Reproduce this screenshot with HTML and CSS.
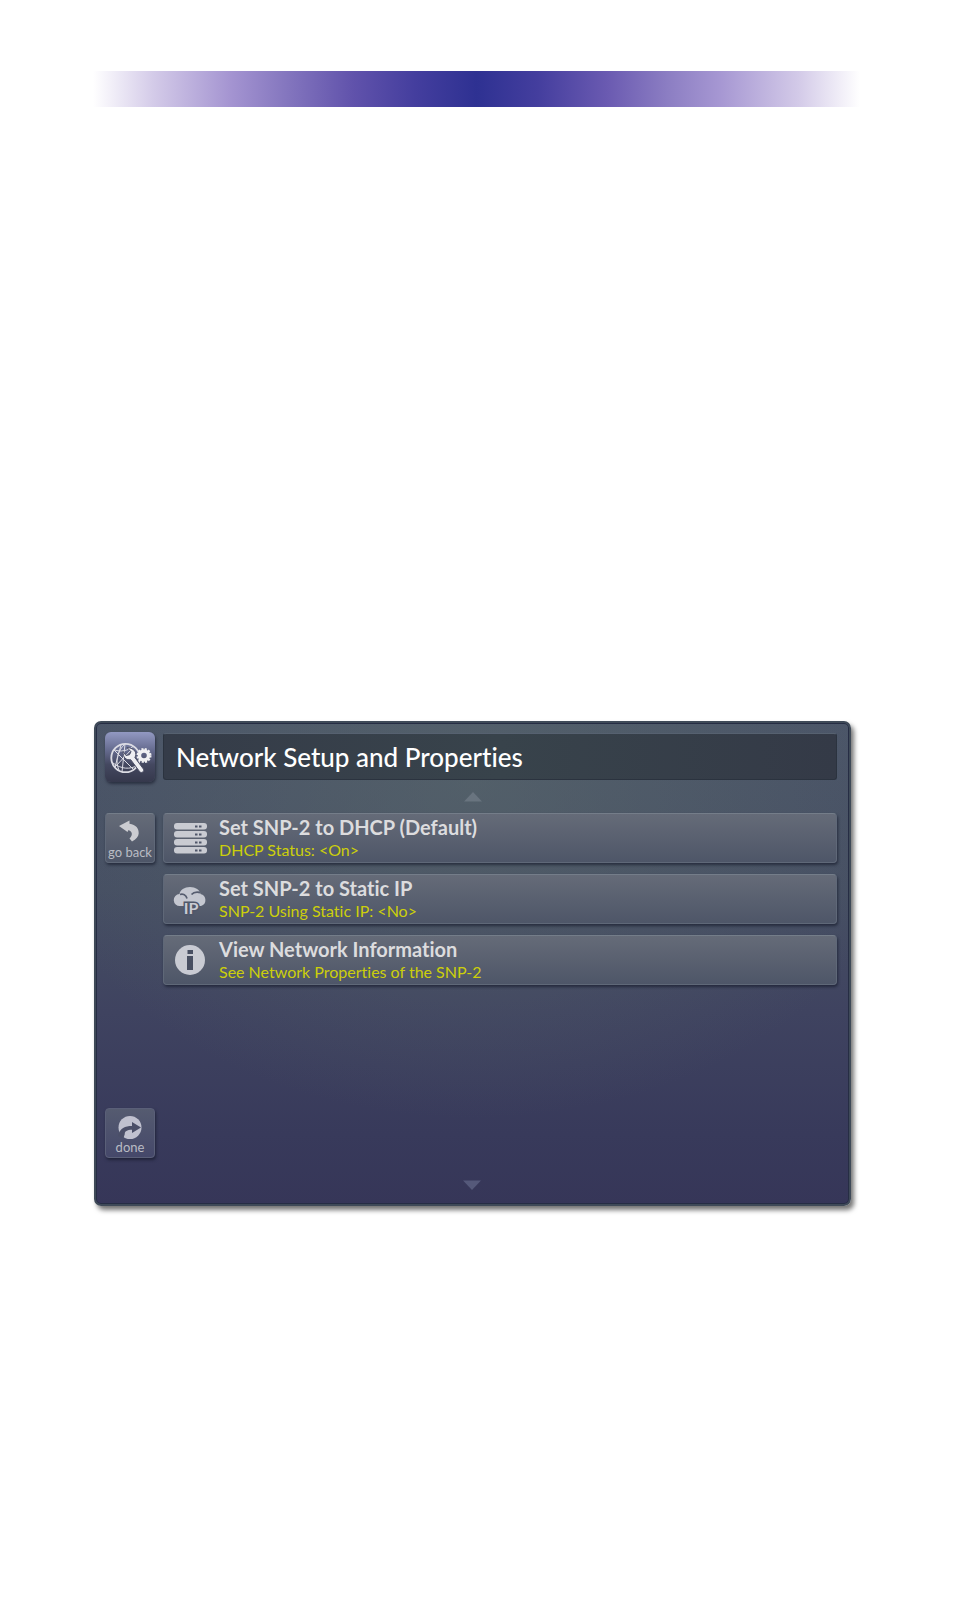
FILE: index.html
```html
<!DOCTYPE html>
<html lang="en">
<head>
<meta charset="utf-8">
<meta name="viewport" content="width=device-width, initial-scale=1">
<title>Network Setup and Properties</title>
<link rel="stylesheet" href="styles.css">
</head>
<body>
<div class="page">
  <div class="banner"></div>
  <main class="panel">
    <div class="app-icon">
      <svg viewBox="0 0 50 50" width="50" height="50" aria-hidden="true">
        <g fill="none" stroke="#dcdce4" stroke-width="1">
          <circle cx="20.5" cy="26" r="14.2" stroke-width="1.8"/>
          <path d="M10 18C15 20 23 19 28 14.500M20 12C12 19 10 30 14 38M20 12L17 40M8 31C16 37 25 38 33 33M9 18L28 37M16 13L10 35L26 18"/>
        </g>
        <path d="M22 15.500l4 4.200-1.500 3-3.500.8-2.800-4c-.5 6 3 9 7.500 8.200l9 12c2 2 5-.3 3.700-2.700l-8.500-11.500c2.500-4 .1-9.500-7.900-10z" fill="#eeeef2" stroke="#4c4f66" stroke-width="1"/>
        <circle cx="39" cy="23.500" r="6" fill="none" stroke="#f0f0f2" stroke-width="3" stroke-dasharray="1.900 1.240"/>
        <circle cx="39" cy="23.500" r="4.500" fill="none" stroke="#f0f0f2" stroke-width="3.400"/>
      </svg>
    </div>
    <h1 class="title">Network Setup and Properties</h1>

    <button class="arrow arrow-up" type="button" aria-label="Scroll up">
      <svg viewBox="0 0 18 10" width="18" height="10"><path d="M9 0l9 9.500H0z"/></svg>
    </button>

    <nav class="side">
      <button class="tile" type="button">
        <svg viewBox="0 0 50 30" width="50" height="30" aria-hidden="true">
          <path d="M14 12L24.500 6.500v3.200C31 10.500 34 14.500 33.700 19.500c-.2 3-2.500 5.800-6.700 8-.8-1.200-1.500-2-2.500-3 3.500-3.500 3-7-1-8.500l-1 2z" fill="#cbccd1"/>
        </svg>
        <span>go back</span>
      </button>
      <button class="tile tile-done" type="button">
        <svg viewBox="0 0 50 30" width="50" height="30" aria-hidden="true">
          <circle cx="25" cy="18.500" r="11.500" fill="#c0c1cf"/>
          <path d="M13 27C15 19 20 17 27 17V13L36 18.500 27 24V20.700C22 20.700 19.500 22.500 19.800 25L18.500 29z" fill="#4b4f68"/>
        </svg>
        <span>done</span>
      </button>
    </nav>

    <div class="list">
      <button class="item" type="button">
        <svg viewBox="0 0 34 34" width="34" height="34" aria-hidden="true">
          <g fill="#c9cbd2">
            <rect x="1" y="2" width="33" height="6.500" rx="3"/>
            <rect x="1" y="10" width="33" height="6.500" rx="3"/>
            <rect x="1" y="18" width="33" height="6.500" rx="3"/>
            <rect x="1" y="26" width="33" height="6.500" rx="3"/>
          </g>
          <path d="M22 5.500h2.500M26 5.500h2.500M22 13.500h2.500M26 13.500h2.500M22 21.500h2.500M26 21.500h2.500M22 29.500h2.500M26 29.500h2.500" stroke="#50576a" stroke-width="2"/>
        </svg>
        <span class="text"><span class="name">Set SNP-2 to DHCP (Default)</span><span class="note">DHCP Status: &lt;On&gt;</span></span>
      </button>
      <button class="item" type="button">
        <svg viewBox="0 0 34 34" width="34" height="34" aria-hidden="true">
          <path d="M7 24a6 6 0 0 1-.5-12C7 8 11.500 5 17 5s10 3 10.500 7A6.200 6.200 0 0 1 28 24z" fill="#c4c7d0"/>
          <path d="M7 12.500c3-.8 6 .5 7 4M27 10.500c-4-.8-7 .3-8.500 2" fill="none" stroke="#565d6f" stroke-width="1.800"/>
          <text class="ip" x="18" y="32" text-anchor="middle">IP</text>
        </svg>
        <span class="text"><span class="name">Set SNP-2 to Static IP</span><span class="note">SNP-2 Using Static IP: &lt;No&gt;</span></span>
      </button>
      <button class="item" type="button">
        <svg viewBox="0 0 34 34" width="34" height="34" aria-hidden="true">
          <circle cx="17" cy="17" r="15" fill="#c9cbd3"/>
          <path d="M14.500 7h5.500v4h-5.500zM14 13h6v14h-6z" fill="#484f62"/>
        </svg>
        <span class="text"><span class="name">View Network Information</span><span class="note">See Network Properties of the SNP-2</span></span>
      </button>
    </div>

    <button class="arrow arrow-down" type="button" aria-label="Scroll down">
      <svg viewBox="0 0 18 10" width="18" height="10"><path d="M0 .5h18L9 10z"/></svg>
    </button>
  </main>
</div>
</body>
</html>
```
FILE: styles.css
```css
* {
  box-sizing: border-box;
}

body {
  margin: 0;
  background: #fff;
  font-family: Lato, "Liberation Sans", sans-serif;
  font-variant-ligatures: none;
}

.page {
  min-height: 100vh;
  padding: 71px 93px;
}

.banner {
  height: 36px;
  background: linear-gradient(90deg, #fff 0%, #d3cae8 8%, #a494d1 18%, #8577bf 25%, #6052ab 34%, #443e9e 42%, #2e3192 50%, #443e9e 58%, #6a5ab1 67%, #8c7ec3 75%, #a798d3 82%, #d3cae8 92%, #fff 100%);
}

.panel {
  display: grid;
  grid-template-columns: 50px 1fr;
  grid-template-rows: 48px 33px 345px auto;
  column-gap: 8px;
  margin: 614px 9px 0 1px;
  padding: 9px 12px 14px 9px;
  border: 2px solid #3f4a58;
  border-radius: 7px;
  background:
    radial-gradient(ellipse 60% 70% at 50% 12%, rgba(92, 108, 108, 0.5), rgba(92, 108, 108, 0) 100%),
    linear-gradient(#4a5468 0%, #464f63 35%, #3f4360 60%, #383a5b 85%, #363658 100%);
  background-origin: border-box;
  box-shadow: inset 0 0 0 1px #262d44, 3px 4px 5px rgba(0, 0, 0, 0.55);
}

.app-icon {
  height: 50px;
  border-radius: 6px;
  background: linear-gradient(#9299c2 0%, #676d91 35%, #444860 65%, #35384c 100%);
  box-shadow: 1px 2px 3px rgba(20, 24, 40, 0.6);
}

.app-icon svg,
.item svg,
.arrow svg {
  display: block;
}

.title {
  align-self: center;
  height: 47px;
  margin: 0;
  padding-left: 12px;
  border: 1px solid #2b333f;
  border-top-color: #566170;
  border-radius: 3px;
  background: linear-gradient(90deg, #353c49, #38434b 50%, #343a47);
  color: #fff;
  font-size: 26px;
  font-weight: 500;
  line-height: 46px;
}

.arrow {
  grid-column: 1 / -1;
  place-self: center;
  margin: 0;
  padding: 0;
  border: 0;
  background: none;
}

.arrow-up {
  padding-left: 4px;
}

.arrow-down {
  padding: 22px 0 0 2px;
}

.arrow path {
  fill: #69747f;
}

.arrow-down path {
  fill: #55597a;
}

.side {
  display: flex;
  flex-direction: column;
  justify-content: space-between;
}

.tile,
.item {
  border: 1px solid #5f6878;
  border-top-color: #747d89;
  border-radius: 4px;
  background: linear-gradient(#656b78, #4e5668);
  box-shadow: 1px 2px 3px rgba(20, 24, 42, 0.65);
  font-family: inherit;
  font-variant-ligatures: inherit;
}

.tile {
  display: flex;
  flex-direction: column;
  align-items: center;
  width: 50px;
  height: 50px;
  padding: 0;
  color: #b9bcc4;
  font-size: 13px;
  line-height: 16px;
}

.tile-done {
  border-color: #5a5f78;
  background: linear-gradient(#555b70, #45486a);
}

.list {
  display: flex;
  flex-direction: column;
  gap: 11px;
}

.item {
  display: flex;
  align-items: center;
  gap: 12px;
  height: 50px;
  padding: 0 9px;
  text-align: left;
}

.text {
  display: flex;
  flex-direction: column;
}

.name {
  color: #dcdcde;
  font-size: 20px;
  font-weight: 700;
  line-height: 24px;
}

.note {
  color: #cccf0a;
  font-size: 16px;
  line-height: 22px;
}

.ip {
  fill: #c9cbd3;
  stroke: #4f576a;
  stroke-width: 3px;
  paint-order: stroke;
  font-size: 16px;
  font-weight: 700;
}
```
